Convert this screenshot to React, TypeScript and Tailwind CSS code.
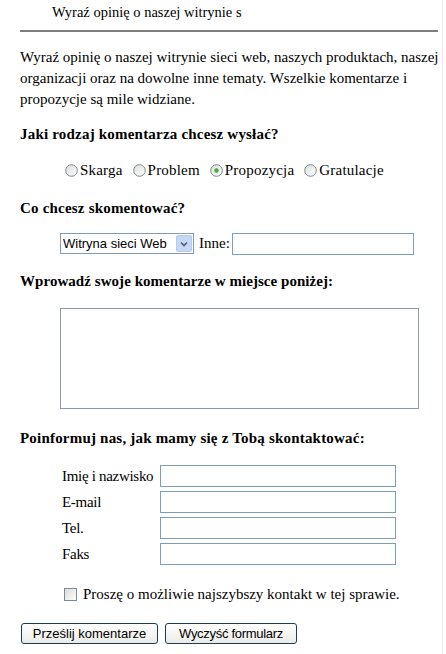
import React from 'react';

const serif = "font-['Liberation_Serif','Times_New_Roman',serif]";
const sans = "font-['Liberation_Sans',Arial,sans-serif]";

function Radio({ checked = false }: { checked?: boolean }) {
  const id = checked ? 'rg1' : 'rg0';
  return (
    <svg width="13" height="13" viewBox="0 0 13 13" className="shrink-0">
      <defs>
        <linearGradient id={id} x1="0" y1="0" x2="1" y2="1">
          <stop offset="0" stopColor="#dcdcd6" />
          <stop offset="1" stopColor="#ffffff" />
        </linearGradient>
      </defs>
      <circle cx="6.5" cy="6.5" r="5.8" fill={`url(#${id})`} stroke="#7a8a99" strokeWidth="1" />
      {checked && <circle cx="6.5" cy="6.5" r="2.2" fill="#3fae3f" />}
    </svg>
  );
}

function TextBox({ className = '' }: { className?: string }) {
  return <div className={`border border-[#7f9db9] bg-white ${className}`} />;
}

export default function App() {
  const radios = [
    { label: 'Skarga', checked: false },
    { label: 'Problem', checked: false },
    { label: 'Propozycja', checked: true },
    { label: 'Gratulacje', checked: false },
  ];
  const contacts = ['Imię i nazwisko', 'E-mail', 'Tel.', 'Faks'];

  return (
    <div className={`w-[446px] h-[654px] bg-white text-black text-[15px] ${serif} flex`}>
      <div className="w-[442px] pl-[20px]">
        <div className="h-[24px] leading-[24px] pl-[32px] text-[14.5px]">Wyraź opinię o naszej witrynie s</div>
        <div className="mt-[6px] w-[418px] h-[2px] bg-[#7d7d7d]" />

        <p className="mt-[15px] leading-[21px]">
          Wyraź opinię o naszej witrynie sieci web, naszych produktach, naszej organizacji oraz na dowolne inne tematy. Wszelkie komentarze i propozycje są mile widziane.
        </p>

        <h2 className="mt-[14px] leading-[21px] font-bold tracking-[0.2px]">Jaki rodzaj komentarza chcesz wysłać?</h2>

        <div className="mt-[15px] h-[21px] flex items-center pl-[45px] gap-[10px]">
          {radios.map((r) => (
            <label key={r.label} className="flex items-center gap-[2px]">
              <Radio checked={r.checked} />
              <span className="tracking-[0.2px]">{r.label}</span>
            </label>
          ))}
        </div>

        <h2 className="mt-[17px] leading-[21px] font-bold tracking-[0.2px]">Co chcesz skomentować?</h2>

        <div className="mt-[14px] h-[21px] flex items-center pl-[40px]">
          <div className={`w-[134px] h-[21px] border border-[#7f9db9] bg-white flex items-center pl-[2px] pr-[1px] ${sans} text-[13px]`}>
            <span className="flex-1 leading-none">Witryna sieci Web</span>
            <div className="w-[16px] h-[17px] rounded-[2px] border border-[#b8cbe8] bg-[#c7d7f5] flex items-center justify-center">
              <svg width="8" height="6" viewBox="0 0 8 6">
                <path d="M1 1.5 L4 4.5 L7 1.5" fill="none" stroke="#4d6185" strokeWidth="1.6" />
              </svg>
            </div>
          </div>
          <span className="ml-[5px]">Inne:</span>
          <TextBox className="ml-[2px] w-[182px] h-[22px]" />
        </div>

        <h2 className="mt-[17px] leading-[21px] font-bold tracking-[0.05px]">Wprowadź swoje komentarze w miejsce poniżej:</h2>

        <div className="mt-[16px] pl-[40px]">
          <div className="w-[359px] h-[101px] border border-[#8e9aa3] bg-white" />
        </div>

        <h2 className="mt-[19px] leading-[21px] font-bold tracking-[0.2px]">Poinformuj nas, jak mamy się z Tobą skontaktować:</h2>

        <div className="mt-[16px] pl-[42px] flex flex-col gap-[4px]">
          {contacts.map((c) => (
            <div key={c} className="flex items-center h-[22px]">
              <span className="w-[98px] tracking-[-0.3px]">{c}</span>
              <TextBox className="w-[236px] h-[22px]" />
            </div>
          ))}
        </div>

        <div className="mt-[19px] h-[21px] flex items-center pl-[44px] gap-[6px]">
          <div className="w-[13px] h-[13px] border border-[#7a8a99] bg-gradient-to-br from-[#dcdcd6] to-white" />
          <span>Proszę o możliwie najszybszy kontakt w tej sprawie.</span>
        </div>

        <div className={`mt-[18px] flex gap-[7px] pl-[1px] ${sans} text-[13px]`}>
          <button className="h-[21px] w-[137px] rounded-[3px] border border-[#1f3a5a] bg-gradient-to-b from-white to-[#ebebe6]">
            Prześlij komentarze
          </button>
          <button className="h-[21px] w-[132px] rounded-[3px] border border-[#1f3a5a] bg-gradient-to-b from-white to-[#ebebe6] tracking-[-0.3px]">
            Wyczyść formularz
          </button>
        </div>
      </div>
      <div className="w-[1px] h-full bg-[#ececec]" />
    </div>
  );
}
